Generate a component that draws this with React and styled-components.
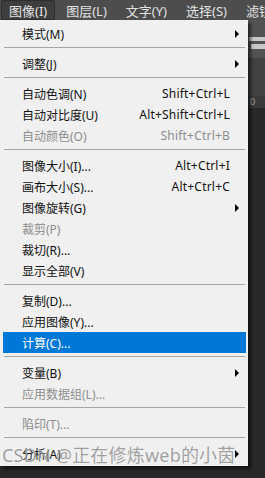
import React from 'react'
import styled, {createGlobalStyle} from 'styled-components'

const Global = createGlobalStyle`
    html, body {
        margin: 0;
        padding: 0;
        background: #282828;
        overflow: hidden;
    }
    body {
        font-family: "Noto Sans", "Noto Sans CJK SC", sans-serif;
    }
`

const Screen = styled.div`
    width: 265px;
    height: 478px;
    position: relative;
    display: flex;
    flex-direction: column;
    background: #282828;
    overflow: hidden;
`

const MenuBar = styled.div`
    height: 20px;
    display: flex;
    align-items: stretch;
    gap: 3px;
    padding-left: 1px;
    background: #4d4d4d;
    flex-shrink: 0;
`

const BarItem = styled.div`
    display: flex;
    align-items: center;
    padding: 0 7px;
    font-size: 13px;
    color: #e2e2e2;
    white-space: nowrap;
    border-radius: 2px;
    border: 1px solid ${props=>props.open ? "#2e2e2e" : "transparent"};
    background: ${props=>props.open ? "#3e3e3e" : "transparent"};
`

const Workspace = styled.div`
    flex: 1;
    display: flex;
    flex-direction: column;
`

const OptionsBar = styled.div`
    height: 39px;
    background: #535353;
    display: flex;
    flex-direction: column;
    align-items: flex-end;
    padding-top: 17px;
    gap: 3px;
    box-sizing: border-box;
    border-bottom: 1px solid #3f3f3f;
`

const Slab = styled.div`
    height: ${props=>props.h}px;
    width: ${props=>props.w}px;
    background: #c8c8c8;
`

const TabStrip = styled.div`
    height: 37px;
    background: #424242;
`

const Ruler = styled.div`
    height: 12px;
    background: #3a3a3a;
    color: #a8a8a8;
    font-size: 9px;
    line-height: 12px;
    padding-left: 250px;
`

const Canvas = styled.div`
    flex: 1;
    background: #282828;
`

const Panel = styled.div`
    position: absolute;
    left: 0;
    top: 20px;
    width: 248px;
    box-sizing: border-box;
    padding: 3px 2px 2px 3px;
    background: #f0f0f0;
    box-shadow: 3px 3px 3px rgba(0,0,0,0.55);
    display: flex;
    flex-direction: column;
`

const Row = styled.div`
    height: 21px;
    display: flex;
    align-items: center;
    padding: 0 7px 0 19px;
    font-size: 12px;
    white-space: nowrap;
    background: ${props=>props.active ? "#0078d7" : "transparent"};
    color: ${props=>props.active ? "#ffffff" : props.disabled ? "#8d8d8d" : "#111111"};
`

const Label = styled.span`
    flex: 1;
`

const Shortcut = styled.span`
    margin-right: 9px;
    letter-spacing: 0.2px;
`

const Arrow = styled.span`
    width: 0;
    height: 0;
    border-top: 4px solid transparent;
    border-bottom: 4px solid transparent;
    border-left: 4px solid #000;
`

const Separator = styled.div`
    height: 1px;
    margin: 3px 1px 5px 1px;
    background: #a5a5a5;
`

const Watermark = styled.div`
    position: absolute;
    left: 2px;
    top: 441px;
    font-size: 18px;
    letter-spacing: 0.2px;
    color: rgba(125,125,125,0.72);
    text-shadow: 0 0 1px rgba(255,255,255,0.6);
    white-space: nowrap;
    pointer-events: none;
`

const menu = [
    {label: "模式(M)", sub: true},
    "-",
    {label: "调整(J)", sub: true},
    "-",
    {label: "自动色调(N)", key: "Shift+Ctrl+L"},
    {label: "自动对比度(U)", key: "Alt+Shift+Ctrl+L"},
    {label: "自动颜色(O)", key: "Shift+Ctrl+B", disabled: true},
    "-",
    {label: "图像大小(I)...", key: "Alt+Ctrl+I"},
    {label: "画布大小(S)...", key: "Alt+Ctrl+C"},
    {label: "图像旋转(G)", sub: true},
    {label: "裁剪(P)", disabled: true},
    {label: "裁切(R)..."},
    {label: "显示全部(V)"},
    "-",
    {label: "复制(D)..."},
    {label: "应用图像(Y)..."},
    {label: "计算(C)...", active: true},
    "-",
    {label: "变量(B)", sub: true},
    {label: "应用数据组(L)...", disabled: true},
    "-",
    {label: "陷印(T)...", disabled: true},
    "-",
    {label: "分析(A)", sub: true},
]

const bar = ["图像(I)", "图层(L)", "文字(Y)", "选择(S)", "滤镜(T)"]

function App(){
    return (
        <Screen>
            <Global />
            <MenuBar>
                {bar.map((name, i)=><BarItem key={name} open={i===0}>{name}</BarItem>)}
            </MenuBar>
            <Workspace>
                <OptionsBar>
                    <Slab w={16} h={4} />
                    <Slab w={14} h={5} />
                </OptionsBar>
                <TabStrip />
                <Ruler>0</Ruler>
                <Canvas />
            </Workspace>
            <Panel>
                {menu.map((item, i)=>{
                    if(item==="-") return <Separator key={i} />
                    return (
                        <Row key={i} active={item.active} disabled={item.disabled}>
                            <Label>{item.label}</Label>
                            {item.key && <Shortcut>{item.key}</Shortcut>}
                            {item.sub && <Arrow />}
                        </Row>
                    )
                })}
            </Panel>
            <Watermark>CSDN @正在修炼web的小茵</Watermark>
        </Screen>
    )
}

export default App
